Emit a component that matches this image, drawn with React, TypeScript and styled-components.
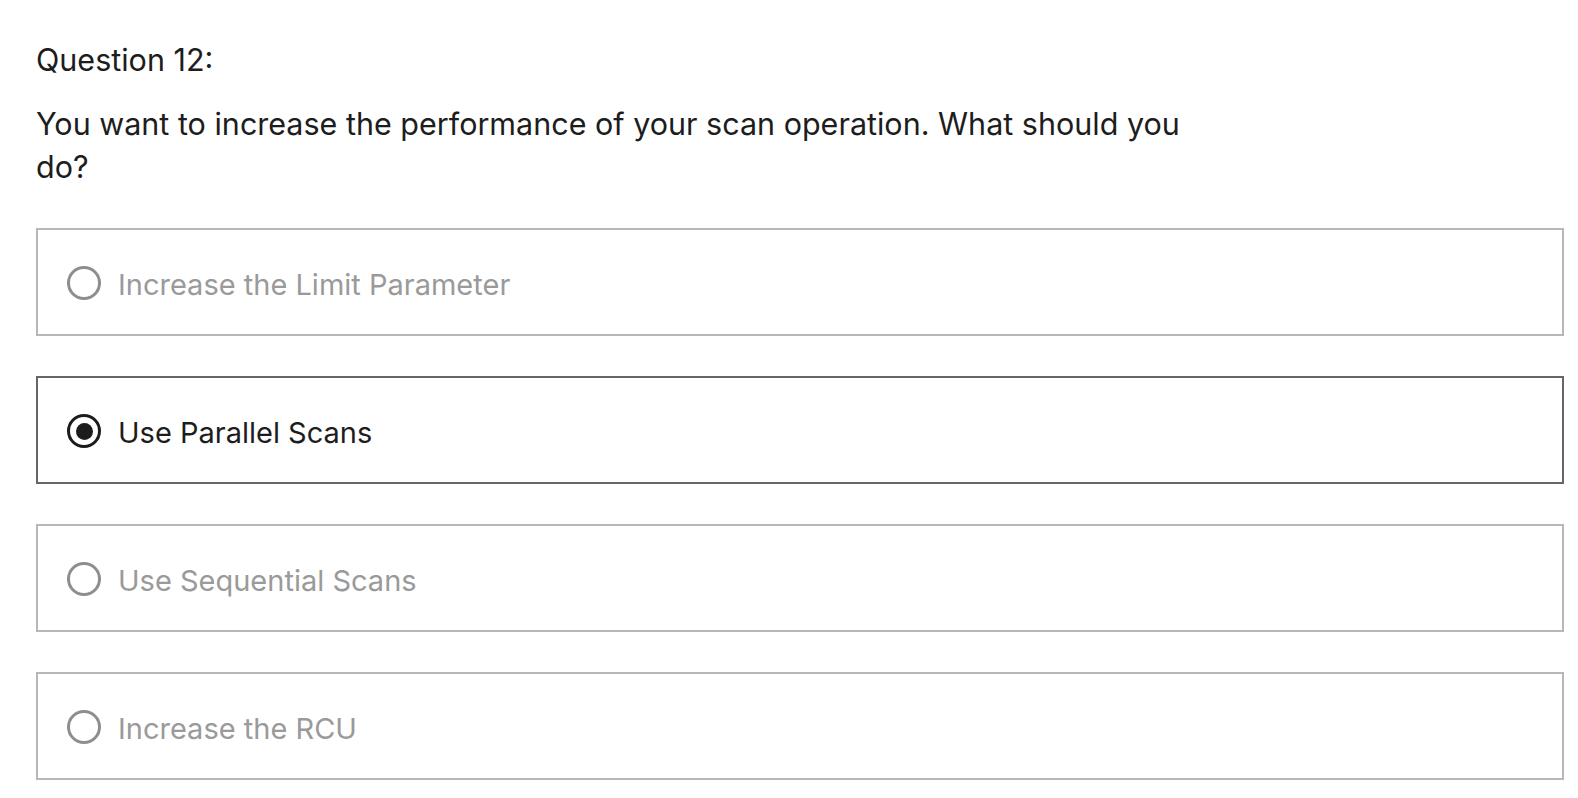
import React from "react";
import styled, { createGlobalStyle } from "styled-components";

const GlobalStyle = createGlobalStyle`
  html, body {
    margin: 0;
    padding: 0;
    background: #ffffff;
  }
  body {
    font-family: Inter, "Noto Sans", "Liberation Sans", sans-serif;
    -webkit-font-smoothing: antialiased;
  }
`;

const Page = styled.div`
  padding: 38px 14px 20px 36px;
`;

const QuestionNumber = styled.div`
  font-size: 30.5px;
  line-height: 43px;
  color: #1d1d1d;
`;

const QuestionText = styled.p`
  margin: 21px 0 0 0;
  max-width: 1175px;
  font-size: 30.5px;
  line-height: 43px;
  color: #1d1d1d;
`;

const Options = styled.div`
  margin-top: 40px;
  display: flex;
  flex-direction: column;
  gap: 40px;
`;

const OptionBox = styled.label<{ $selected: boolean }>`
  display: flex;
  align-items: center;
  gap: 17px;
  height: 108px;
  box-sizing: border-box;
  padding: 2px 29px 0 29px;
  border: 2px solid ${({ $selected }) => ($selected ? "#666666" : "#b7b7b7")};
  background: #ffffff;
  cursor: pointer;
`;

const Radio = styled.span<{ $selected: boolean }>`
  width: 34px;
  height: 34px;
  box-sizing: border-box;
  border-radius: 50%;
  border: 3.5px solid ${({ $selected }) => ($selected ? "#1c1c1c" : "#8e8e8e")};
  display: flex;
  align-items: center;
  justify-content: center;
  flex-shrink: 0;

  &::after {
    content: "";
    width: 17px;
    height: 17px;
    border-radius: 50%;
    background: #1c1c1c;
    display: ${({ $selected }) => ($selected ? "block" : "none")};
  }
`;

const OptionLabel = styled.span<{ $selected: boolean }>`
  font-size: 29px;
  padding-top: 2px;
  color: ${({ $selected }) => ($selected ? "#1d1d1d" : "#9a9a9a")};
`;

const options = [
  "Increase the Limit Parameter",
  "Use Parallel Scans",
  "Use Sequential Scans",
  "Increase the RCU",
];

const App: React.FC = () => {
  const [selected, setSelected] = React.useState(1);
  return (
    <>
      <GlobalStyle />
      <Page>
        <QuestionNumber>Question 12:</QuestionNumber>
        <QuestionText>
          You want to increase the performance of your scan operation. What should you do?
        </QuestionText>
        <Options>
          {options.map((text, i) => (
            <OptionBox key={text} $selected={i === selected} onClick={() => setSelected(i)}>
              <Radio $selected={i === selected} />
              <OptionLabel $selected={i === selected}>{text}</OptionLabel>
            </OptionBox>
          ))}
        </Options>
      </Page>
    </>
  );
};

export default App;
